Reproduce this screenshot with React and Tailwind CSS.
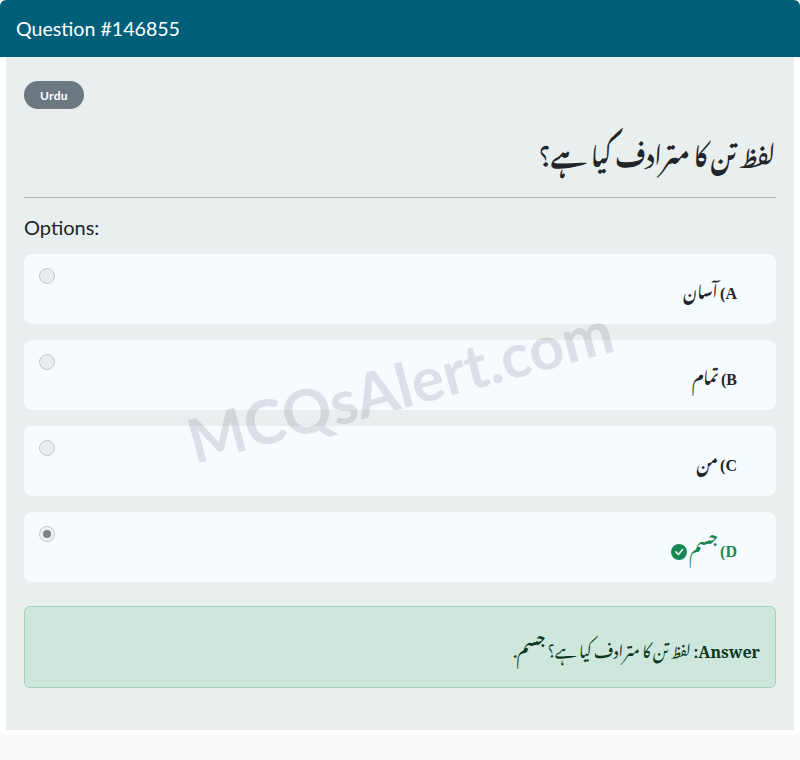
import React from "react";

const urdu = "font-['Noto_Nastaliq_Urdu','DejaVu_Sans',serif]";

const options = [
  { key: "A", text: "آسان" },
  { key: "B", text: "تمام" },
  { key: "C", text: "من" },
  { key: "D", text: "جسم", correct: true },
];

const CheckBadge = () => (
  <svg width="16" height="16" viewBox="0 0 16 16" fill="#198754" className="shrink-0 mt-[4px]">
    <path d="M16 8A8 8 0 1 1 0 8a8 8 0 0 1 16 0zm-3.97-3.03a.75.75 0 0 0-1.08.02L7.47 9.42 5.38 7.33a.75.75 0 0 0-1.06 1.06l2.65 2.65a.75.75 0 0 0 1.08-.02l3.99-4.99a.75.75 0 0 0-.01-1.06z" />
  </svg>
);

const Option = ({ option }) => (
  <div className="flex justify-between h-[70px] rounded-lg bg-[#f6fbff] pl-[15px] pr-[39px]">
    <div
      className={`mt-[14px] w-4 h-4 rounded-full border border-[#c4c8cb] flex items-center justify-center ${
        option.correct ? "bg-[#eef0f2]" : "bg-[#e9ecef]"
      }`}
    >
      {option.correct && <div className="w-2 h-2 rounded-full bg-[#7c8287]" />}
    </div>
    <div
      dir="rtl"
      className={`flex items-center gap-[2px] pt-[5px] text-base font-bold ${urdu} ${
        option.correct ? "text-[#198754]" : "text-[#212529]"
      }`}
    >
      <span>
        <span className="font-['Liberation_Serif',serif]">{option.key})</span> {option.text}
      </span>
      {option.correct && <CheckBadge />}
    </div>
  </div>
);

export default function App() {
  return (
    <div className="relative h-[760px] overflow-hidden bg-[#fafafa] font-['Lato','Open_Sans',sans-serif] text-[#212529]">
      <div className="bg-white pb-[5px] rounded-md">
        <div className="h-[57px] flex items-center px-4 rounded-t-md bg-[#005f78] text-white text-[19.6px]">
          Question #146855
        </div>
        <div className="mx-[6px] h-[673px] bg-[#e9eeee] px-[18px] pt-6">
          <span className="inline-flex items-center justify-center w-[60px] h-7 pt-px rounded-full bg-[#6b7880] text-white text-xs font-bold tracking-wide">
            Urdu
          </span>
          <h1
            dir="rtl"
            className={`mt-4 h-[73px] flex items-center pb-[20px] text-[24.2px] font-bold border-b border-[#b5b8b9] ${urdu}`}
          >
            لفظ تن کا مترادف کیا ہے؟
          </h1>
          <p className="mt-[15px] text-xl leading-7">Options:</p>
          <div className="mt-[13px] flex flex-col gap-4">
            {options.map((option) => (
              <Option key={option.key} option={option} />
            ))}
          </div>
          <div
            dir="rtl"
            className="mt-6 h-[82px] flex items-center pt-[6px] px-[15px] rounded-md border border-[#a3cfbb] bg-[#cde7dd] text-[#0a3622]"
          >
            <span className={`text-base ${urdu}`}>
              <b className="font-['Noto_Serif','Liberation_Serif',serif]">Answer:</b> لفظ تن کا مترادف کیا ہے؟ <b>جسم</b>.
            </span>
          </div>
        </div>
      </div>
      <div className="absolute left-[400px] top-[385px] -translate-x-1/2 -translate-y-1/2 -rotate-[15deg] whitespace-nowrap text-[61px] font-bold text-[#5f6b75]/[0.18] pointer-events-none">
        MCQsAlert.com
      </div>
    </div>
  );
}
